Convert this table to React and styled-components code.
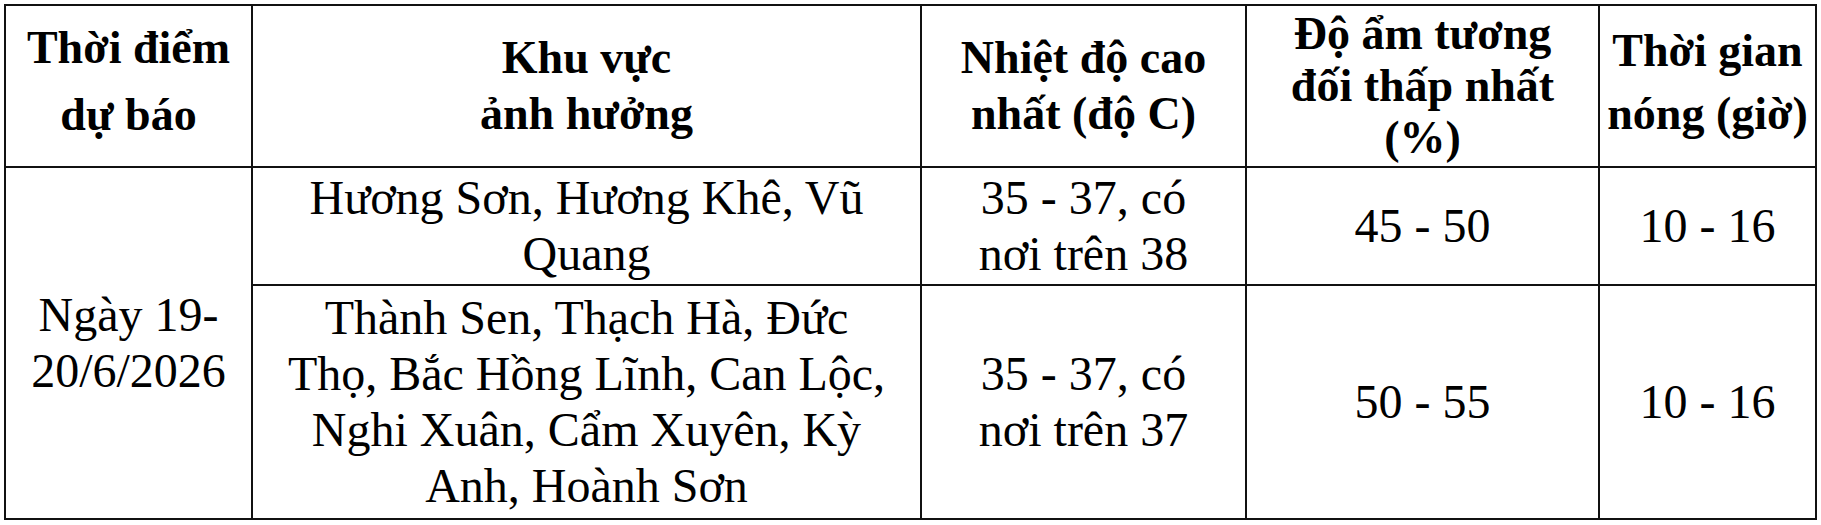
import React from 'react';
import styled, { createGlobalStyle } from 'styled-components';

const GlobalStyle = createGlobalStyle`
  html, body {
    margin: 0;
    padding: 0;
    background: #ffffff;
  }
  body {
    font-family: "Liberation Serif", "Times New Roman", serif;
    color: #000000;
  }
`;

const Page = styled.div`
  padding: 4px 0 0 4px;
`;

const Table = styled.table`
  border-collapse: collapse;
  table-layout: fixed;
  width: 1813px;
  font-family: "Liberation Serif", "Times New Roman", serif;
`;

const HeadRow = styled.tr`
  height: 162px;
`;

const BodyRow = styled.tr`
  height: ${props => props.h}px;
`;

const HeadCell = styled.th`
  border: 2px solid #111;
  padding: 0 4px ${props => props.lift || 0}px;
  font-family: "Liberation Serif", "Times New Roman", serif;
  font-size: 46px;
  font-weight: bold;
  line-height: ${props => props.lh};
  text-align: center;
  vertical-align: middle;
`;

const Cell = styled.td`
  border: 2px solid #111;
  padding: 0 4px;
  font-family: "Liberation Serif", "Times New Roman", serif;
  font-size: 48px;
  font-weight: normal;
  line-height: 1.17;
  text-align: center;
  vertical-align: middle;
`;

const columns = [
  { id: 'time', width: 247, lh: 1.45, lift: 8, lines: ['Thời điểm', 'dự báo'] },
  { id: 'area', width: 669, lh: 1.22, lift: 0, lines: ['Khu vực', 'ảnh hưởng'] },
  { id: 'temp', width: 325, lh: 1.22, lift: 0, lines: ['Nhiệt độ cao', 'nhất (độ C)'] },
  { id: 'humid', width: 353, lh: 1.13, lift: 0, lines: ['Độ ẩm tương', 'đối thấp nhất', '(%)'] },
  { id: 'hours', width: 217, lh: 1.38, lift: 8, lines: ['Thời gian', 'nóng (giờ)'] }
];

const rows = [
  {
    id: 'r1',
    height: 118,
    area: ['Hương Sơn, Hương Khê, Vũ', 'Quang'],
    temp: ['35 - 37, có', 'nơi trên 38'],
    humid: '45 - 50',
    hours: '10 - 16'
  },
  {
    id: 'r2',
    height: 234,
    area: [
      'Thành Sen, Thạch Hà, Đức',
      'Thọ, Bắc Hồng Lĩnh, Can Lộc,',
      'Nghi Xuân, Cẩm Xuyên, Kỳ',
      'Anh, Hoành Sơn'
    ],
    temp: ['35 - 37, có', 'nơi trên 37'],
    humid: '50 - 55',
    hours: '10 - 16'
  }
];

const Lines = ({ lines }) =>
  lines.map((line, i) => (
    <React.Fragment key={i}>
      {i > 0 && <br />}
      {line}
    </React.Fragment>
  ));

const App = () => (
  <>
    <GlobalStyle />
    <Page>
      <Table>
        <colgroup>
          {columns.map(col => (
            <col key={col.id} style={{ width: col.width }} />
          ))}
        </colgroup>
        <thead>
          <HeadRow>
            {columns.map(col => (
              <HeadCell key={col.id} lh={col.lh} lift={col.lift}>
                <Lines lines={col.lines} />
              </HeadCell>
            ))}
          </HeadRow>
        </thead>
        <tbody>
          {rows.map((row, idx) => (
            <BodyRow key={row.id} h={row.height}>
              {idx === 0 && (
                <Cell rowSpan={rows.length}>
                  <Lines lines={['Ngày 19-', '20/6/2026']} />
                </Cell>
              )}
              <Cell>
                <Lines lines={row.area} />
              </Cell>
              <Cell>
                <Lines lines={row.temp} />
              </Cell>
              <Cell>{row.humid}</Cell>
              <Cell>{row.hours}</Cell>
            </BodyRow>
          ))}
        </tbody>
      </Table>
    </Page>
  </>
);

export default App;
